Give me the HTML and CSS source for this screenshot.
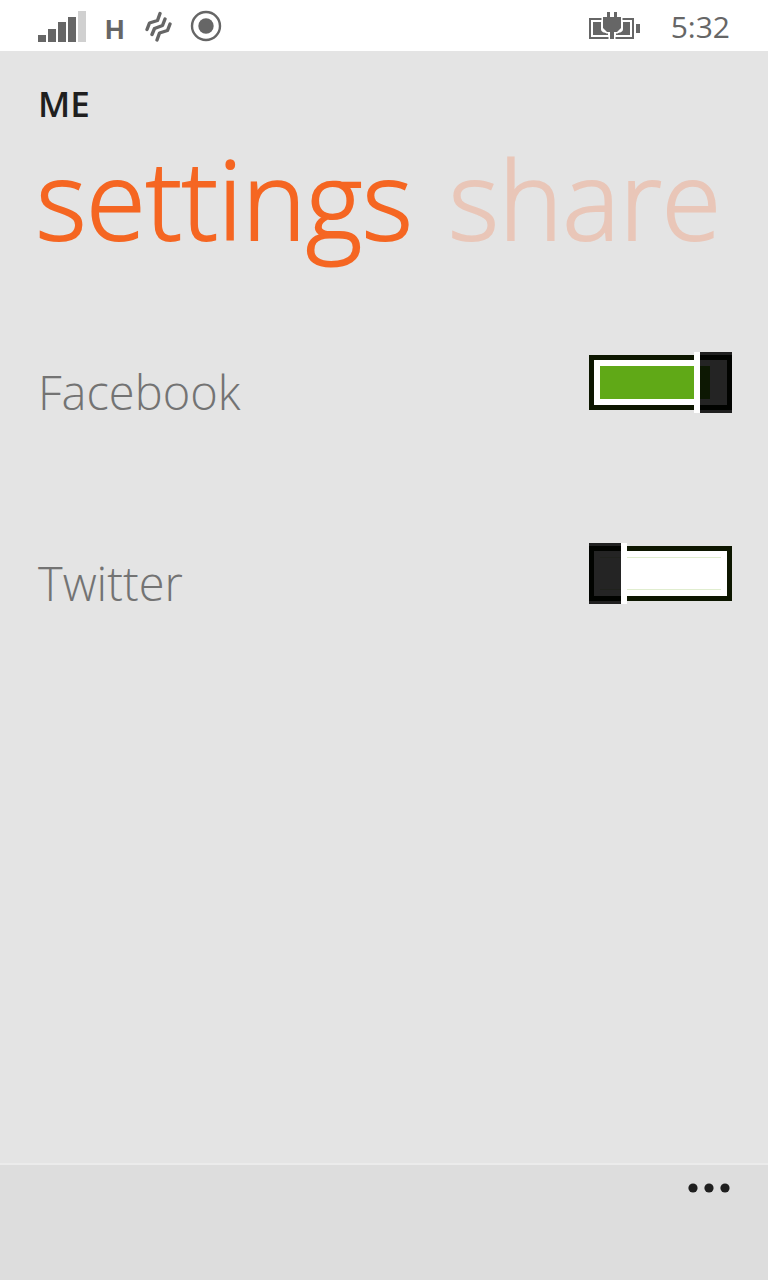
FILE: index.html
```html
<!DOCTYPE html>
<html lang="en">
<head>
<meta charset="utf-8">
<meta name="viewport" content="width=device-width, initial-scale=1">
<title>Me - settings</title>
<link rel="stylesheet" href="styles.css">
</head>
<body class="screen">
<header class="status">
  <div class="status-icons">
    <svg width="48" height="32" viewBox="0 0 48 32" aria-hidden="true">
      <path fill="#666" d="M0 25h8v7H0zM10 19h8v13h-8zM20 12h8v20h-8zM30 7h8v25h-8z"/>
      <path fill="#d0d0d0" d="M40 1h8v31h-8z"/>
    </svg>
    <span class="network">H</span>
    <svg class="vibrate" width="28" height="32" viewBox="0 0 28 32" fill="none" stroke="#666" stroke-width="3.4" stroke-linecap="round" stroke-linejoin="round" aria-hidden="true">
      <path d="M3 19.500l2.500-6.500 8-2.500L16 3.500M8 24.500l2.500-6 8-3L21 9M13 30l2.500-7 8-2.500L26 14"/>
    </svg>
    <svg width="32" height="32" viewBox="0 0 32 32" aria-hidden="true">
      <circle cx="16" cy="16" r="14" fill="none" stroke="#666" stroke-width="2.400"/>
      <circle cx="16" cy="16" r="7.700" fill="#666"/>
    </svg>
  </div>
  <div class="status-icons">
    <svg width="52" height="32" viewBox="0 0 52 32" fill="#666" aria-hidden="true">
      <path fill-rule="evenodd" d="M0 8h45v21H0zM2 10v17h41V10z"/>
      <path d="M4 12h8v7c0 3 3 4 7 4v2H4zM41 12h-7v7c0 3-3 4-7 4v2h14zM47 14h4v9h-4z"/>
      <path stroke="#fff" stroke-width="3" paint-order="stroke" d="M18 2h3v5h4V2h3v5h4v11l-4 4h-3v7h-4v-7h-3l-4-4V7h4z"/>
    </svg>
    <time class="clock">5:32</time>
  </div>
</header>
<main class="content">
  <h1 class="app-title">ME</h1>
  <nav class="pivot">
    <a class="pivot-item current" href="#settings" aria-current="page">settings</a>
    <a class="pivot-item" href="#share">share</a>
  </nav>
  <form class="options" id="settings">
    <div class="option">
      <label class="option-label" for="facebook">Facebook</label>
      <input class="switch" id="facebook" type="checkbox" role="switch" checked>
    </div>
    <div class="option">
      <label class="option-label" for="twitter">Twitter</label>
      <input class="switch" id="twitter" type="checkbox" role="switch">
    </div>
  </form>
</main>
<footer class="app-bar">
  <button class="more" type="button" aria-label="More">
    <svg width="42" height="10" viewBox="0 0 42 10" fill="#1f1f1f" aria-hidden="true">
      <circle cx="5" cy="5" r="4.600"/><circle cx="21" cy="5" r="4.600"/><circle cx="37" cy="5" r="4.600"/>
    </svg>
  </button>
</footer>
</body>
</html>
```
FILE: styles.css
```css
*,
*::before,
*::after {
  box-sizing: border-box;
}

.screen {
  display: flex;
  flex-direction: column;
  min-height: 100vh;
  margin: 0;
  background: #e4e4e4;
  font-family: "Open Sans", "Noto Sans", sans-serif;
}

.status {
  display: flex;
  justify-content: space-between;
  height: 51px;
  padding: 10px 38px 0 38px;
  background: #fff;
  color: #666;
}

.status-icons {
  display: flex;
  align-items: flex-start;
}

.network {
  margin: 4px 19px 0 19px;
  font-size: 27px;
  line-height: 32px;
  font-weight: 700;
  font-family: "Liberation Sans", sans-serif;
}

.vibrate {
  margin-right: 18px;
}

.clock {
  margin-left: 30px;
  font-size: 30px;
  line-height: 34px;
  font-weight: 400;
}

.content {
  flex: 1;
  padding: 32px 36px 0 38px;
}

.app-title {
  margin: 0;
  color: #1f1f1f;
  font-size: 35px;
  line-height: 42px;
  font-weight: 600;
}

.pivot {
  display: flex;
  gap: 36px;
  margin-left: -2px;
  white-space: nowrap;
}

.pivot-item {
  color: #e9c6b8;
  font-size: 108px;
  line-height: 148px;
  font-weight: 300;
  text-decoration: none;
  -webkit-text-stroke: 2px;
}

.current {
  color: #f56622;
}

.options {
  display: grid;
  gap: 130px;
  margin: 79px 0 0;
}

.option {
  display: flex;
  align-items: flex-start;
  justify-content: space-between;
  height: 61px;
}

.option-label {
  margin-top: 5px;
  color: #737373;
  font-size: 47px;
  line-height: 70px;
  font-weight: 300;
}

.switch {
  display: grid;
  flex: none;
  width: 143px;
  height: 61px;
  margin: 0;
  appearance: none;
  cursor: pointer;
}

.switch::before,
.switch::after {
  content: "";
  grid-area: 1 / 1;
}

.switch::before {
  margin: 3px 0;
  padding: 6px;
  border: 5px solid #0d1600;
  background: linear-gradient(#e0edcf, #e0edcf) 0 0 / 100% 1px no-repeat content-box,
    linear-gradient(#e0edcf, #e0edcf) 0 100% / 100% 1px no-repeat content-box,
    #fff;
}

.switch::after {
  width: 38px;
  border-right: 6px solid #fff;
  background: rgba(0, 0, 0, 0.86) padding-box;
}

.switch:checked::before {
  background: linear-gradient(#60a917, #60a917) 0 0 / 110px 100% no-repeat content-box, #fff;
}

.switch:checked::after {
  justify-self: end;
  border-right: 0;
  border-left: 6px solid #fff;
}

.app-bar {
  display: flex;
  justify-content: flex-end;
  align-items: flex-start;
  height: 117px;
  padding: 0 26px;
  border-top: 2px solid #ebebeb;
  background: #ddd;
}

.more {
  display: flex;
  padding: 18px 12px;
  border: 0;
  background: none;
}
```
